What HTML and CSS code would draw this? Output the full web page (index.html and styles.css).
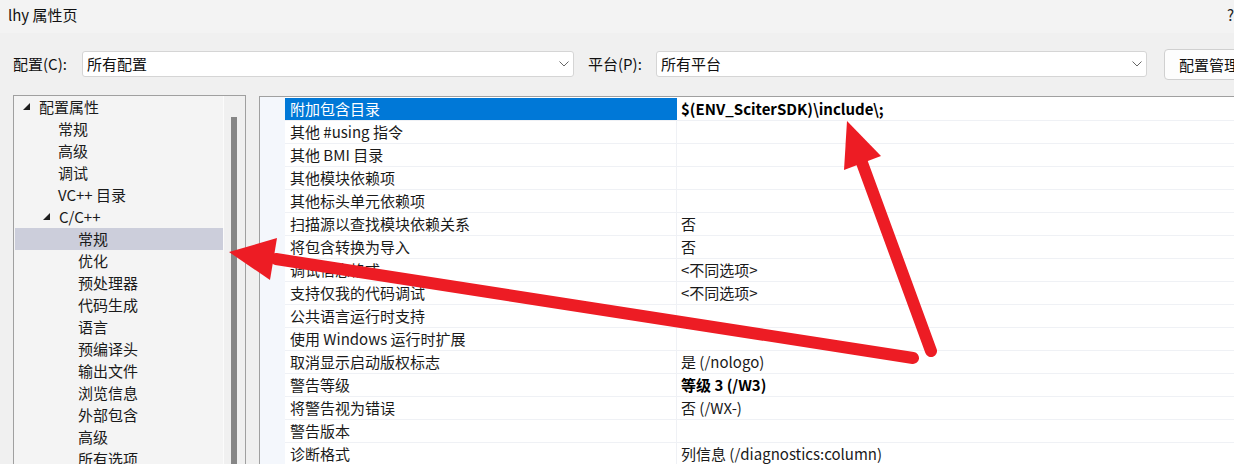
FILE: index.html
```html
<!DOCTYPE html>
<html lang="zh-CN">
<head>
<meta charset="utf-8">
<title>lhy 属性页</title>
<link rel="stylesheet" href="styles.css">
</head>
<body>
<div class="window">
  <div class="titlebar">
    <span class="title">lhy 属性页</span>
    <span class="help">?</span>
  </div>
  <div class="toolbar">
    <span class="lbl lbl-cfg">配置(C):</span>
    <div class="select sel-cfg">
      <span class="sel-text">所有配置</span>
      <svg class="chev" width="10" height="6" viewBox="0 0 10 6"><path d="M0.5 0.5 L5 5 L9.5 0.5" fill="none" stroke="#666" stroke-width="1"/></svg>
    </div>
    <span class="lbl lbl-plat">平台(P):</span>
    <div class="select sel-plat">
      <span class="sel-text">所有平台</span>
      <svg class="chev" width="10" height="6" viewBox="0 0 10 6"><path d="M0.5 0.5 L5 5 L9.5 0.5" fill="none" stroke="#666" stroke-width="1"/></svg>
    </div>
    <button class="btn">配置管理器(O)...</button>
  </div>
  <div class="main">
    <div class="tree">
      <div class="tree-list">
        <div class="node lv0"><svg class="tri" width="8" height="8" viewBox="0 0 8 8"><polygon points="7,0 7,7 0,7" fill="#1e1e1e"/></svg><span>配置属性</span></div>
        <div class="node lv1">常规</div>
        <div class="node lv1">高级</div>
        <div class="node lv1">调试</div>
        <div class="node lv1">VC++ 目录</div>
        <div class="node lv1e"><svg class="tri" width="8" height="8" viewBox="0 0 8 8"><polygon points="7,0 7,7 0,7" fill="#1e1e1e"/></svg><span>C/C++</span></div>
        <div class="node lv2 sel">常规</div>
        <div class="node lv2">优化</div>
        <div class="node lv2">预处理器</div>
        <div class="node lv2">代码生成</div>
        <div class="node lv2">语言</div>
        <div class="node lv2">预编译头</div>
        <div class="node lv2">输出文件</div>
        <div class="node lv2">浏览信息</div>
        <div class="node lv2">外部包含</div>
        <div class="node lv2">高级</div>
        <div class="node lv2">所有选项</div>
      </div>
      <div class="scrollbar"><div class="thumb"></div></div>
    </div>
    <div class="grid">
      <div class="gutter"></div>
      <div class="rows">
        <div class="row selrow"><div class="name">附加包含目录</div><div class="val bold">$(ENV_SciterSDK)\include\;</div></div>
        <div class="row"><div class="name">其他 #using 指令</div><div class="val"></div></div>
        <div class="row"><div class="name">其他 BMI 目录</div><div class="val"></div></div>
        <div class="row"><div class="name">其他模块依赖项</div><div class="val"></div></div>
        <div class="row"><div class="name">其他标头单元依赖项</div><div class="val"></div></div>
        <div class="row"><div class="name">扫描源以查找模块依赖关系</div><div class="val">否</div></div>
        <div class="row"><div class="name">将包含转换为导入</div><div class="val">否</div></div>
        <div class="row"><div class="name">调试信息格式</div><div class="val">&lt;不同选项&gt;</div></div>
        <div class="row"><div class="name">支持仅我的代码调试</div><div class="val">&lt;不同选项&gt;</div></div>
        <div class="row"><div class="name">公共语言运行时支持</div><div class="val"></div></div>
        <div class="row"><div class="name">使用 Windows 运行时扩展</div><div class="val"></div></div>
        <div class="row"><div class="name">取消显示启动版权标志</div><div class="val">是 (/nologo)</div></div>
        <div class="row"><div class="name">警告等级</div><div class="val bold">等级 3 (/W3)</div></div>
        <div class="row"><div class="name">将警告视为错误</div><div class="val">否 (/WX-)</div></div>
        <div class="row"><div class="name">警告版本</div><div class="val"></div></div>
        <div class="row"><div class="name">诊断格式</div><div class="val">列信息 (/diagnostics:column)</div></div>
      </div>
    </div>
  </div>
  <svg class="annot" width="1234" height="464" viewBox="0 0 1234 464">
    <line x1="913" y1="358" x2="276" y2="259" stroke="#ed1c24" stroke-width="12" stroke-linecap="round"/>
    <polygon points="229,252 277,238 270,280" fill="#ed1c24"/>
    <line x1="931" y1="351" x2="861" y2="160" stroke="#ed1c24" stroke-width="12" stroke-linecap="round"/>
    <polygon points="847,121 881,156 844,170" fill="#ed1c24"/>
  </svg>
</div>
</body>
</html>
```

FILE: styles.css
```css
html, body {
  margin: 0;
  padding: 0;
}
body {
  background: #f0f0f0;
  font-family: "Noto Sans CJK SC", "Noto Sans", sans-serif;
  font-size: 15px;
  color: #1a1a1a;
  overflow: hidden;
}
.window {
  position: relative;
  width: 1234px;
  height: 464px;
  overflow: hidden;
}
.titlebar {
  height: 33px;
  background: #f3f3f3;
  display: flex;
  align-items: flex-start;
  justify-content: space-between;
  padding: 0 0 0 8px;
}
.title {
  line-height: 30px;
  color: #111;
}
.help {
  line-height: 30px;
  margin-right: 0;
  color: #222;
}
.toolbar {
  height: 62px;
  display: flex;
  align-items: center;
  padding-left: 13px;
  box-sizing: border-box;
}
.toolbar > * {
  flex: none;
}
.lbl {
  line-height: 20px;
  color: #111;
}
.lbl-cfg { width: 69px; }
.lbl-plat { width: 68px; margin-left: 14px; }
.select {
  height: 26px;
  box-sizing: border-box;
  background: #fff;
  border: 1px solid #d5d5d5;
  border-radius: 3px;
  display: flex;
  align-items: center;
  justify-content: space-between;
  padding: 0 4px 0 4px;
}
.sel-cfg { width: 492px; }
.sel-plat { width: 491px; }
.sel-text {
  line-height: 20px;
  color: #111;
}
.chev { display: block; }
.btn {
  margin-left: 17px;
  height: 31px;
  width: 130px;
  box-sizing: border-box;
  background: #fdfdfd;
  border: 1px solid #d0d0d0;
  border-radius: 4px;
  font: inherit;
  color: #111;
  text-align: left;
  padding: 0 0 0 14px;
  white-space: nowrap;
  overflow: hidden;
}
.main {
  display: flex;
  align-items: flex-start;
  height: 369px;
}
.tree {
  flex: none;
  margin-left: 13px;
  width: 233px;
  height: 380px;
  box-sizing: border-box;
  border: 1px solid #a0a0a0;
  border-bottom: none;
  background: #f4f4f4;
  display: flex;
}
.tree-list {
  width: 208px;
  padding-left: 1px;
}
.node {
  height: 22px;
  line-height: 22px;
  display: flex;
  align-items: center;
  white-space: nowrap;
  color: #1a1a1a;
}
.node .tri { display: block; flex: none; margin-right: 8px; }
.lv0 { padding-left: 8px; }
.lv1 { padding-left: 43px; }
.lv1e { padding-left: 28px; }
.lv2 { padding-left: 63px; }
.node.sel { background: #cccedb; }
.scrollbar {
  width: 22px;
  border-left: 1px solid #fbfbfb;
  background: #f0f0f0;
  box-sizing: border-box;
  padding-left: 7px;
  padding-top: 21px;
}
.thumb {
  width: 6px;
  height: 400px;
  background: #868686;
}
.grid {
  margin-left: 13px;
  margin-top: 1px;
  flex: 1;
  height: 380px;
  border-top: 1px solid #a0a0a0;
  border-left: 1px solid #a0a0a0;
  background: #fff;
  display: flex;
  padding-top: 1px;
}
.gutter {
  width: 25px;
  background: #f4f7fc;
  margin-top: -1px;
}
.rows {
  flex: 1;
}
.row {
  display: grid;
  grid-template-columns: 392px 1fr;
  height: 23px;
  box-sizing: border-box;
  border-bottom: 1px solid #eff1f5;
}
.name {
  padding-left: 5px;
  line-height: 22px;
  white-space: nowrap;
  border-right: 1px solid #eff1f5;
  color: #1a1a1a;
}
.val {
  padding-left: 4px;
  line-height: 22px;
  white-space: nowrap;
  color: #1a1a1a;
}
.bold { font-weight: bold; color: #000; }
.selrow .name {
  background: #0078d7;
  color: #fff;
  border-right-color: #0078d7;
}
.annot {
  position: absolute;
  left: 0;
  top: 0;
  pointer-events: none;
}
```
